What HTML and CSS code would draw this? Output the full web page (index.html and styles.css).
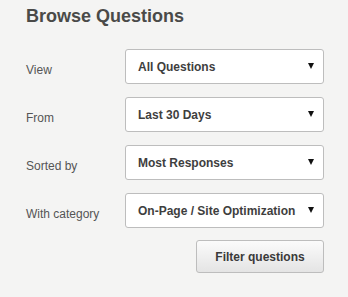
FILE: index.html
```html
<!DOCTYPE html>
<html>
<head>
<meta charset="utf-8">
<link rel="stylesheet" href="styles.css">
</head>
<body>
<div class="panel">
  <h2 class="title">Browse Questions</h2>
  <div class="form">
    <label class="label">View</label>
    <div class="select"><span>All Questions</span><span class="arrow"></span></div>
    <label class="label">From</label>
    <div class="select"><span>Last 30 Days</span><span class="arrow"></span></div>
    <label class="label">Sorted by</label>
    <div class="select"><span>Most Responses</span><span class="arrow"></span></div>
    <label class="label">With category</label>
    <div class="select"><span>On-Page / Site Optimization</span><span class="arrow"></span></div>
  </div>
  <div class="actions">
    <button class="btn">Filter questions</button>
  </div>
</div>
</body>
</html>
```
FILE: styles.css
```css
html, body {
  margin: 0;
  padding: 0;
  background: #f4f4f3;
}
body {
  font-family: "Liberation Sans", Arial, sans-serif;
  width: 348px;
  height: 297px;
  overflow: hidden;
}
.panel {
  padding: 5px 24px 0 26px;
}
.title {
  margin: 0 0 22px 0;
  font-size: 18px;
  line-height: 22px;
  font-weight: bold;
  color: #4a4a48;
}
.form {
  display: grid;
  grid-template-columns: 99px 199px;
  row-gap: 13px;
  align-items: center;
}
.label {
  font-size: 12px;
  color: #555;
  padding-top: 6px;
}
.select {
  box-sizing: border-box;
  height: 35px;
  background: #fff;
  border: 1px solid #bdbdbd;
  border-radius: 3px;
  display: flex;
  align-items: center;
  justify-content: space-between;
  padding: 0 9px 0 12px;
  font-size: 12px;
  font-weight: bold;
  color: #3e3e3e;
}
.arrow {
  width: 0;
  height: 0;
  border-left: 3px solid transparent;
  border-right: 3px solid transparent;
  border-top: 6px solid #111;
  margin-top: -2px;
}
.actions {
  display: flex;
  justify-content: flex-end;
  margin-top: 12px;
}
.btn {
  box-sizing: border-box;
  width: 128px;
  height: 33px;
  border: 1px solid #bdbdbd;
  border-radius: 3px;
  background: linear-gradient(#fbfbfb, #e4e4e4);
  font-family: "Liberation Sans", Arial, sans-serif;
  font-size: 12px;
  font-weight: bold;
  color: #3a3a3a;
  padding: 0;
}
```
